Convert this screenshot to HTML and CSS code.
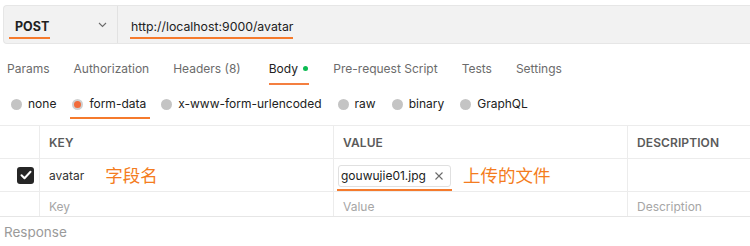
FILE: index.html
```html
<!DOCTYPE html>
<html>
<head>
<meta charset="utf-8">
<link rel="stylesheet" href="styles.css">
</head>
<body>
<div class="urlbar">
  <div class="method">
    <span class="method-name">POST</span>
    <svg class="chev" width="9" height="6" viewBox="0 0 9 6"><path d="M1 1l3.5 3.5L8 1" fill="none" stroke="#6b6b6b" stroke-width="1.1"/></svg>
  </div>
  <div class="url"><span class="url-text">http://localhost:9000/avatar</span></div>
</div>

<div class="tabs">
  <span class="tab">Params</span>
  <span class="tab">Authorization</span>
  <span class="tab">Headers (8)</span>
  <span class="tab active">Body <span class="dot"></span></span>
  <span class="tab">Pre-request Script</span>
  <span class="tab">Tests</span>
  <span class="tab">Settings</span>
</div>

<div class="radios">
  <span class="radio"><span class="circle"></span>none</span>
  <span class="radio selected"><span class="circle"></span>form-data</span>
  <span class="radio"><span class="circle"></span>x-www-form-urlencoded</span>
  <span class="radio"><span class="circle"></span>raw</span>
  <span class="radio"><span class="circle"></span>binary</span>
  <span class="radio"><span class="circle"></span>GraphQL</span>
</div>

<div class="table">
  <div class="row head">
    <div class="cell check"></div>
    <div class="cell key">KEY</div>
    <div class="cell value">VALUE</div>
    <div class="cell desc">DESCRIPTION</div>
  </div>
  <div class="row data">
    <div class="cell check"><span class="checkbox"><svg width="12" height="10" viewBox="0 0 12 10"><path d="M1.5 5.2l3 3 6-6.4" fill="none" stroke="#fff" stroke-width="2" stroke-linecap="round" stroke-linejoin="round"/></svg></span></div>
    <div class="cell key">avatar<span class="note note-key">字段名</span></div>
    <div class="cell value"><span class="chip"><span class="chip-text">gouwujie01.jpg</span><svg class="chip-x" width="8" height="8" viewBox="0 0 8 8"><path d="M0.5 0.5l7 7M7.5 0.5l-7 7" fill="none" stroke="#6b6b6b" stroke-width="1.1"/></svg></span><span class="note note-val">上传的文件</span></div>
    <div class="cell desc"></div>
  </div>
  <div class="row empty">
    <div class="cell check"></div>
    <div class="cell key placeholder">Key</div>
    <div class="cell value placeholder">Value</div>
    <div class="cell desc placeholder">Description</div>
  </div>
</div>

<div class="response">Response</div>
</body>
</html>
```

FILE: styles.css
```css
html, body {
  margin: 0;
  padding: 0;
  background: #ffffff;
}
body {
  font-family: Inter, "Noto Sans", sans-serif;
  font-size: 12px;
  color: #505050;
  width: 750px;
  overflow: hidden;
}
.urlbar {
  margin: 5px 0 0 3px;
  height: 37px;
  display: flex;
  background: #f2f2f2;
  border: 1px solid #e6e6e6;
  border-right: none;
  border-radius: 4px 0 0 4px;
}
.method {
  width: 114px;
  box-sizing: border-box;
  padding: 0 10px 0 5px;
  display: flex;
  align-items: center;
  justify-content: space-between;
  border-right: 1px solid #e2e2e2;
}
.method-name {
  font-weight: 700;
  font-size: 12.5px;
  color: #212121;
  border-bottom: 2px solid #f57a2c;
  padding: 0 1px 3px 6px;
  margin-top: 9px;
  line-height: 15px;
}
.chev {
  margin-top: 1px;
}
.url {
  display: flex;
  align-items: center;
  padding-left: 12px;
}
.url-text {
  font-size: 12.3px;
  color: #212121;
  line-height: 15px;
  border-bottom: 2px solid #f57a2c;
  padding: 0 0 3px 1px;
  margin-top: 9px;
}
.tabs {
  display: flex;
  gap: 24px;
  margin: 17px 0 0 7px;
  height: 24px;
  align-items: flex-start;
}
.tab {
  color: #6b6b6b;
  line-height: 16px;
}
.tab.active {
  color: #212121;
  border-bottom: 2px solid #f47f40;
  height: 22px;
  margin-left: 4px;
  padding-right: 1px;
}
.dot {
  display: inline-block;
  width: 5px;
  height: 5px;
  border-radius: 50%;
  background: #0cbb52;
  margin: 0 0 2px 2px;
}
.radios {
  display: flex;
  gap: 16px;
  padding: 11px 0 0 11px;
  height: 40px;
  box-sizing: border-box;
  align-items: flex-start;
}
.radio {
  display: flex;
  align-items: center;
  gap: 6px;
  color: #212121;
  line-height: 16px;
  height: 16px;
}
.circle {
  width: 11px;
  height: 11px;
  border-radius: 50%;
  background: #c4c4c4;
  box-sizing: border-box;
}
.radio.selected {
  border-bottom: 2px solid #f57a2c;
  padding: 0 4px 5px 2px;
  margin: 0 -5px 0 -2px;
}
.radio.selected .circle {
  background: #f26b3a;
  border: 2px solid #cfcfcf;
}
.table {
  border-top: 1px solid #ececec;
  border-bottom: 1px solid #e6e6e6;
}
.row {
  display: grid;
  grid-template-columns: 39px 294px 294px 1fr;
}
.row + .row {
  border-top: 1px solid #ececec;
}
.cell {
  border-left: 1px solid #ececec;
  display: flex;
  align-items: center;
  padding-left: 9px;
}
.cell.check {
  border-left: none;
  padding: 0 5px 0 0;
  justify-content: flex-end;
}
.head {
  height: 32px;
}
.head .cell {
  font-weight: 600;
  font-size: 12px;
  color: #5a5a5a;
  letter-spacing: 0.1px;
}
.data {
  height: 32px;
}
.data .key {
  color: #333333;
}
.checkbox {
  width: 17px;
  height: 17px;
  border-radius: 3px;
  background: #262626;
  display: flex;
  align-items: center;
  justify-content: center;
}
.note {
  font-family: "Noto Sans CJK SC", sans-serif;
  color: #f47c20;
  font-size: 17.5px;
  line-height: 20px;
}
.note-key {
  margin-left: 21px;
}
.data .value {
  padding-left: 4px;
}
.chip {
  display: flex;
  align-items: center;
  border: 1px solid #e0e0e0;
  border-radius: 3px;
  height: 20px;
  padding: 0 7px 0 2px;
  color: #212121;
  position: relative;
  margin-top: 1px;
}
.chip::after {
  content: "";
  position: absolute;
  left: -2px;
  right: -2px;
  bottom: -5px;
  height: 2px;
  background: #f57a2c;
}
.chip-x {
  margin-left: 9px;
}
.note-val {
  margin-left: 12px;
}
.empty {
  height: 24px;
}
.empty .cell {
  padding-top: 5px;
}
.placeholder {
  color: #a6a6a6;
}
.response {
  color: #9a9a9a;
  font-size: 13.5px;
  line-height: 17px;
  padding: 7px 0 0 4px;
}
```
